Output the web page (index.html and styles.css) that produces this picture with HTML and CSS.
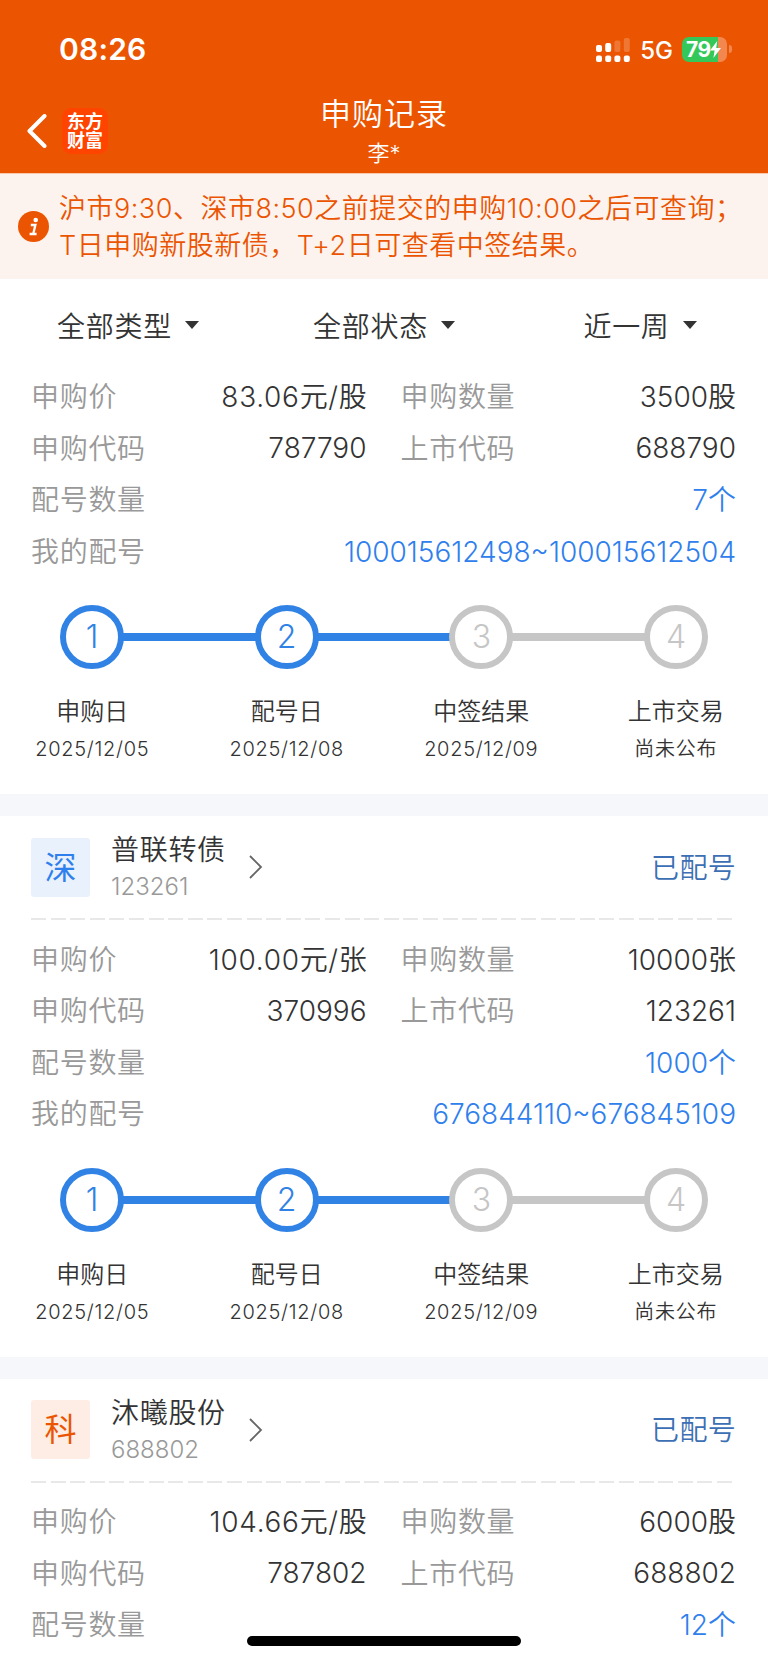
FILE: index.html
```
<!DOCTYPE html>
<html lang="zh-CN">
<head>
    <meta charset="UTF-8">
    <meta name="viewport" content="width=device-width, initial-scale=1.0">
    <title>申购记录</title>
    <link rel="stylesheet" href="styles.css">
</head>
<body>
    <header class="header">
        <div class="status-bar">
            <span class="time">08:26</span>
            <div class="status-icons">
                <svg class="signal" width="34" height="25" viewBox="0 0 34 25" fill="#fff">
                    <rect x="0" y="8" width="6" height="7" rx="2"/>
                    <rect x="9.2" y="6" width="6" height="9" rx="2"/>
                    <rect x="18.4" y="3.5" width="6" height="11.5" rx="2" opacity=".2"/>
                    <rect x="27.8" y="1" width="6" height="14" rx="2" opacity=".2"/>
                    <rect x="0" y="18.5" width="6" height="6.5" rx="2"/>
                    <rect x="9.2" y="18.5" width="6" height="6.5" rx="2"/>
                    <rect x="18.4" y="18.5" width="6" height="6.5" rx="2"/>
                    <rect x="27.8" y="18.5" width="6" height="6.5" rx="2"/>
                </svg>
                <span class="network">5G</span>
                <div class="battery">
                    <span class="battery-text">79</span>
                    <svg class="bolt" width="11" height="17" viewBox="0 0 11 17"><path d="M7.2 0 0 9.6h4.6L3.4 17 11 7H6.2z" fill="#fff"/></svg>
                </div>
                <span class="battery-cap"></span>
            </div>
        </div>
        <nav class="nav">
            <div class="nav-left">
                <svg class="back" width="20" height="34" viewBox="0 0 20 34"><path d="M17.5 2 2.5 17l15 15" fill="none" stroke="#fff" stroke-width="4" stroke-linecap="round" stroke-linejoin="round"/></svg>
                <div class="logo">东方<br>财富</div>
            </div>
            <div class="nav-title">
                <h1>申购记录</h1>
                <p>李*</p>
            </div>
        </nav>
    </header>

    <div class="notice">
        <svg class="info" width="31" height="31" viewBox="0 0 31 31">
            <circle cx="15.5" cy="15.5" r="15.5" fill="#eb5502"/>
            <circle cx="17.7" cy="9" r="2.3" fill="#fff"/>
            <path d="M12.8 14h4.6l-2.2 9M11.6 23h7" fill="none" stroke="#fff" stroke-width="2.3"/>
        </svg>
        <p>沪市9:30、深市8:50之前提交的申购10:00之后可查询；<br>T日申购新股新债，T+2日可查看中签结果。</p>
    </div>

    <div class="filters">
        <button>全部类型<i class="caret"></i></button>
        <button>全部状态<i class="caret"></i></button>
        <button>近一周<i class="caret"></i></button>
    </div>

    <section class="card">
        <dl class="info-grid">
            <div class="cell"><dt>申购价</dt><dd class="unit price">83.06元/股</dd></div>
            <div class="cell"><dt>申购数量</dt><dd class="unit">3500股</dd></div>
            <div class="cell"><dt>申购代码</dt><dd>787790</dd></div>
            <div class="cell"><dt>上市代码</dt><dd>688790</dd></div>
            <div class="cell wide"><dt>配号数量</dt><dd class="unit">7个</dd></div>
            <div class="cell wide"><dt>我的配号</dt><dd>100015612498~100015612504</dd></div>
        </dl>
        <div class="track">
            <span class="dot done">1</span><span class="line done"></span>
            <span class="dot done">2</span><span class="line done"></span>
            <span class="dot">3</span><span class="line"></span>
            <span class="dot">4</span>
        </div>
        <div class="steps">
            <div><h3>申购日</h3><p>2025/12/05</p></div>
            <div><h3>配号日</h3><p>2025/12/08</p></div>
            <div><h3>中签结果</h3><p>2025/12/09</p></div>
            <div><h3>上市交易</h3><p>尚未公布</p></div>
        </div>
    </section>

    <section class="card">
        <div class="card-head">
            <span class="tag blue">深</span>
            <div class="stock">
                <h2>普联转债</h2>
                <p>123261</p>
            </div>
            <svg class="arrow" width="14" height="24" viewBox="0 0 14 24"><path d="M1 1l11 11L1 23" fill="none" stroke="#666" stroke-width="1.8"/></svg>
            <span class="status">已配号</span>
        </div>
        <div class="divider"></div>
        <dl class="info-grid">
            <div class="cell"><dt>申购价</dt><dd class="unit price">100.00元/张</dd></div>
            <div class="cell"><dt>申购数量</dt><dd class="unit">10000张</dd></div>
            <div class="cell"><dt>申购代码</dt><dd>370996</dd></div>
            <div class="cell"><dt>上市代码</dt><dd>123261</dd></div>
            <div class="cell wide"><dt>配号数量</dt><dd class="unit">1000个</dd></div>
            <div class="cell wide"><dt>我的配号</dt><dd>676844110~676845109</dd></div>
        </dl>
        <div class="track">
            <span class="dot done">1</span><span class="line done"></span>
            <span class="dot done">2</span><span class="line done"></span>
            <span class="dot">3</span><span class="line"></span>
            <span class="dot">4</span>
        </div>
        <div class="steps">
            <div><h3>申购日</h3><p>2025/12/05</p></div>
            <div><h3>配号日</h3><p>2025/12/08</p></div>
            <div><h3>中签结果</h3><p>2025/12/09</p></div>
            <div><h3>上市交易</h3><p>尚未公布</p></div>
        </div>
    </section>

    <section class="card">
        <div class="card-head">
            <span class="tag orange">科</span>
            <div class="stock">
                <h2>沐曦股份</h2>
                <p>688802</p>
            </div>
            <svg class="arrow" width="14" height="24" viewBox="0 0 14 24"><path d="M1 1l11 11L1 23" fill="none" stroke="#666" stroke-width="1.8"/></svg>
            <span class="status">已配号</span>
        </div>
        <div class="divider"></div>
        <dl class="info-grid">
            <div class="cell"><dt>申购价</dt><dd class="unit price">104.66元/股</dd></div>
            <div class="cell"><dt>申购数量</dt><dd class="unit">6000股</dd></div>
            <div class="cell"><dt>申购代码</dt><dd>787802</dd></div>
            <div class="cell"><dt>上市代码</dt><dd>688802</dd></div>
            <div class="cell wide"><dt>配号数量</dt><dd class="unit">12个</dd></div>
        </dl>
    </section>

    <div class="home-indicator"></div>
</body>
</html>
```
FILE: styles.css
```
* {
    box-sizing: border-box;
    margin: 0;
    padding: 0;
}

body {
    font-family: Inter, "Noto Sans CJK SC", sans-serif;
    font-size: 28px;
    font-weight: 350;
    color: #333;
    background: #fff;
    height: 1663px;
    overflow: hidden;
}

h1, h2, h3 {
    font-weight: 350;
}

.header {
    height: 174px;
    background: #eb5502;
    border-bottom: 1px solid #f9c9ae;
    color: #fff;
}

.status-bar {
    display: flex;
    justify-content: space-between;
    align-items: center;
    height: 98px;
    padding: 0 36px 0 59px;
}

.time {
    font-size: 30px;
    font-weight: 600;
    letter-spacing: 0.2px;
}

.status-icons {
    display: flex;
    align-items: center;
}

.network {
    font-size: 24px;
    font-weight: 450;
    margin: 2px 9px 0 10px;
}

.battery {
    display: flex;
    align-items: center;
    width: 45px;
    height: 25px;
    padding-left: 4px;
    border-radius: 7px;
    background: linear-gradient(to right, #34c759 36px, #f28850 36px);
}

.battery-text {
    font-size: 21px;
    font-weight: 700;
    letter-spacing: -0.6px;
}

.bolt {
    flex: none;
}

.battery-cap {
    width: 3px;
    height: 8px;
    margin-left: 2px;
    border-radius: 0 3px 3px 0;
    background: #f28850;
}

.nav {
    position: relative;
    height: 75px;
}

.nav-left {
    position: absolute;
    left: 27px;
    top: 10px;
    display: flex;
    align-items: center;
}

.logo {
    width: 46px;
    height: 46px;
    margin-left: 15px;
    padding-top: 4px;
    border-radius: 9px;
    background: #ff4400;
    font-size: 18px;
    font-weight: 700;
    line-height: 19px;
    text-align: center;
}

.nav-title {
    text-align: center;
}

.nav-title h1 {
    font-size: 31px;
    letter-spacing: 1px;
    line-height: 31px;
}

.nav-title p {
    font-size: 22px;
    line-height: 48px;
}

.notice {
    display: flex;
    align-items: center;
    height: 105px;
    padding-left: 18px;
    background: #fdf3ee;
    color: #eb5502;
}

.notice p {
    margin-left: 10px;
    font-size: 27px;
    letter-spacing: 0.5px;
    line-height: 37px;
    white-space: nowrap;
}

.filters {
    display: flex;
    justify-content: space-around;
    height: 92px;
}

.filters button {
    display: flex;
    align-items: center;
    flex: 1;
    justify-content: center;
    border: none;
    background: none;
    color: #333;
    font: inherit;
    letter-spacing: 0.7px;
}

.caret {
    margin-left: 13px;
    border: 7px solid transparent;
    border-top: 8px solid #333;
    border-bottom: 0;
}

.card {
    border-bottom: 22px solid #f5f7fa;
}

.card:last-of-type {
    border-bottom: none;
}

.card-head {
    display: flex;
    align-items: center;
    height: 102px;
    padding: 0 32px 0 31px;
}

.tag {
    width: 59px;
    height: 59px;
    border-radius: 3px;
    font-size: 32px;
    font-weight: 400;
    line-height: 59px;
    text-align: center;
}

.tag.blue {
    background: #e9f1fc;
    color: #2f80ed;
}

.tag.orange {
    background: #fdede5;
    color: #eb5502;
}

.stock {
    width: 138px;
    margin-left: 21px;
    padding-top: 2px;
}

.stock h2 {
    font-size: 28px;
    letter-spacing: 0.7px;
    line-height: 38px;
}

.stock p {
    font-size: 24px;
    line-height: 36px;
    color: #999;
}

.status {
    margin-left: auto;
    padding-bottom: 3px;
    letter-spacing: 0.3px;
    color: #3c6fb4;
}

.divider {
    height: 2px;
    margin: 0 35px 13px 31px;
    background: repeating-linear-gradient(to right, #e8e8e8 0 15px, transparent 15px 19.6px);
}

.info-grid {
    display: grid;
    grid-template-columns: 1fr 1fr;
    grid-auto-rows: 51.6px;
    column-gap: 34px;
    padding: 0 32px 0 31px;
}

.cell {
    display: flex;
    justify-content: space-between;
    align-items: center;
    white-space: nowrap;
}

.cell.wide {
    grid-column: span 2;
}

dt {
    padding-bottom: 3px;
    color: #999;
    letter-spacing: 0.7px;
}

.unit {
    padding-bottom: 3px;
}

.price {
    margin-right: -1px;
    letter-spacing: 0.7px;
}

.wide dd {
    color: #2f80ed;
}

.track {
    display: flex;
    align-items: center;
    padding: 28px 60px 0;
}

.dot {
    width: 64px;
    height: 64px;
    border: 6.5px solid #c6c6c6;
    border-radius: 50%;
    font-size: 32px;
    font-weight: 300;
    line-height: 51px;
    text-align: center;
    color: #c6c6c6;
}

.line {
    flex: 1;
    height: 8px;
    margin: 0 -1px;
    background: #c6c6c6;
}

.dot.done {
    border-color: #3182e5;
    color: #3182e5;
}

.line.done {
    background: #3182e5;
}

.steps {
    display: grid;
    grid-template-columns: repeat(4, 1fr);
    height: 125px;
    margin: 0 -5px;
    padding-top: 24px;
    text-align: center;
}

.steps h3 {
    font-size: 24px;
    line-height: 37px;
}

.steps p {
    font-size: 20px;
    letter-spacing: 0.7px;
    line-height: 38px;
}

.home-indicator {
    position: fixed;
    left: 247px;
    bottom: 17px;
    width: 274px;
    height: 10px;
    border-radius: 5px;
    background: #000;
}
```
